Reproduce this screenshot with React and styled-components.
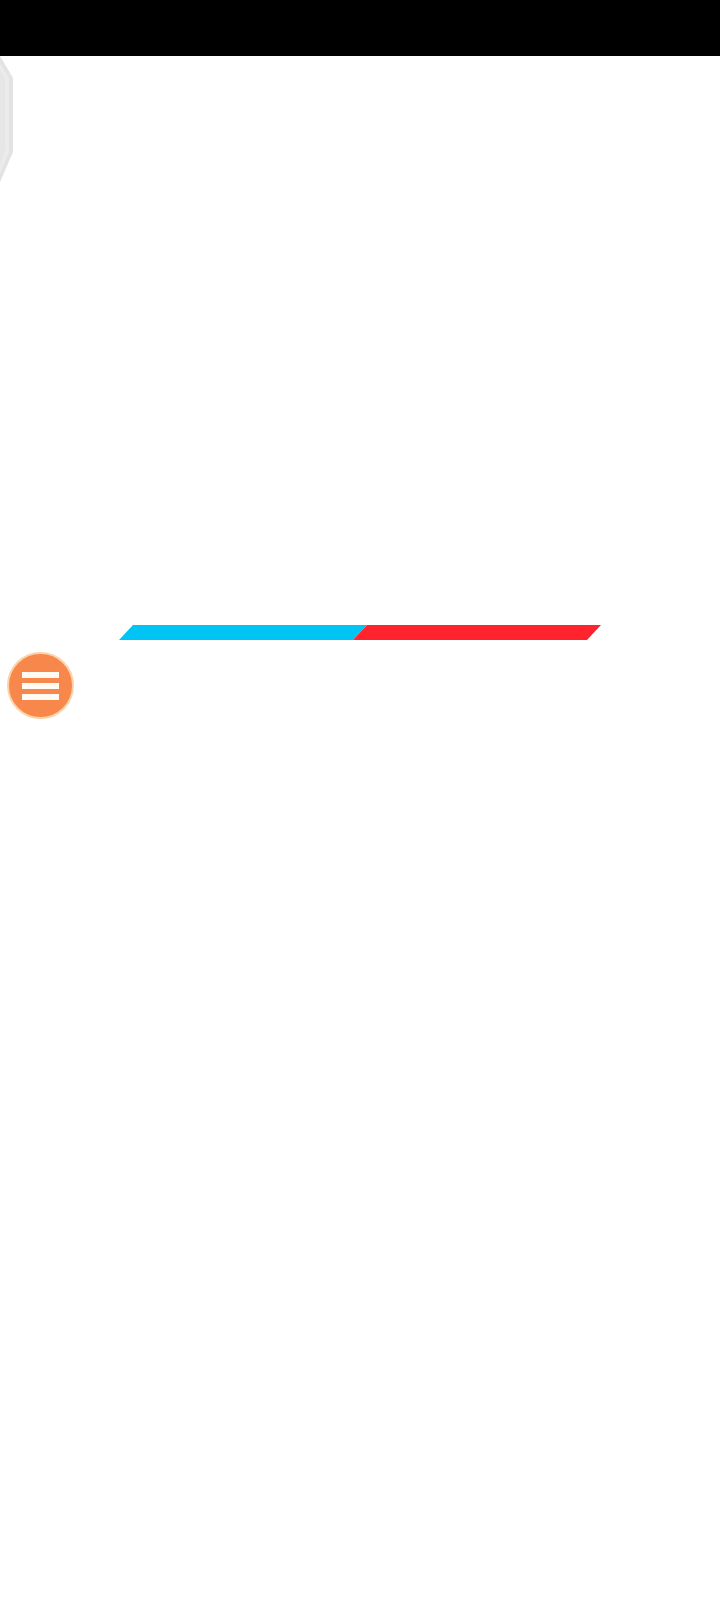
import React from 'react';
import styled, { createGlobalStyle } from 'styled-components';

const GlobalStyle = createGlobalStyle`
  html, body {
    margin: 0;
    padding: 0;
    background: #ffffff;
    font-family: "Liberation Sans", Arial, sans-serif;
  }
`;

const Page = styled.div`
  position: relative;
  width: 720px;
  min-height: 1600px;
  background: #ffffff;
  display: flex;
  flex-direction: column;
`;

const StatusBar = styled.header`
  height: 56px;
  background: #000000;
  flex-shrink: 0;
`;

const Content = styled.main`
  display: flex;
  flex-direction: column;
  align-items: center;
  padding-top: 569px;
`;

const Loader = styled.div`
  display: flex;
  width: 468px;
  height: 15px;
  transform: skewX(-43deg);
`;

const Segment = styled.div`
  flex: 1;
  background: ${(p) => p.color};
`;

const DrawerTab = styled.svg`
  position: absolute;
  left: 0;
  top: 56px;
`;

const MenuButton = styled.button`
  position: absolute;
  left: 7px;
  top: 652px;
  width: 67px;
  height: 67px;
  border-radius: 50%;
  background: #f7874a;
  border: 2px solid #fcd3a8;
  box-sizing: border-box;
  padding: 0;
  display: flex;
  flex-direction: column;
  align-items: center;
  justify-content: center;
  gap: 5px;
  cursor: pointer;
`;

const MenuLine = styled.span`
  display: block;
  width: 37px;
  height: 6px;
  background: #fffaf2;
`;

export default function App() {
  return (
    <>
      <GlobalStyle />
      <Page>
        <StatusBar />
        <Content>
          <Loader>
            <Segment color="#00c4f4" />
            <Segment color="#fe232c" />
          </Loader>
        </Content>
        <DrawerTab width="14" height="128" viewBox="0 0 14 128">
          <polygon points="0,0 13,22 13,96 0,126" fill="#e3e3e3" />
          <polygon points="0,7 9,22 9,96 0,118" fill="#ebebeb" />
          <polygon points="0,14 5,24 5,94 0,110" fill="#e6e6e6" />
        </DrawerTab>
        <MenuButton aria-label="Menu">
          <MenuLine />
          <MenuLine />
          <MenuLine />
        </MenuButton>
      </Page>
    </>
  );
}
